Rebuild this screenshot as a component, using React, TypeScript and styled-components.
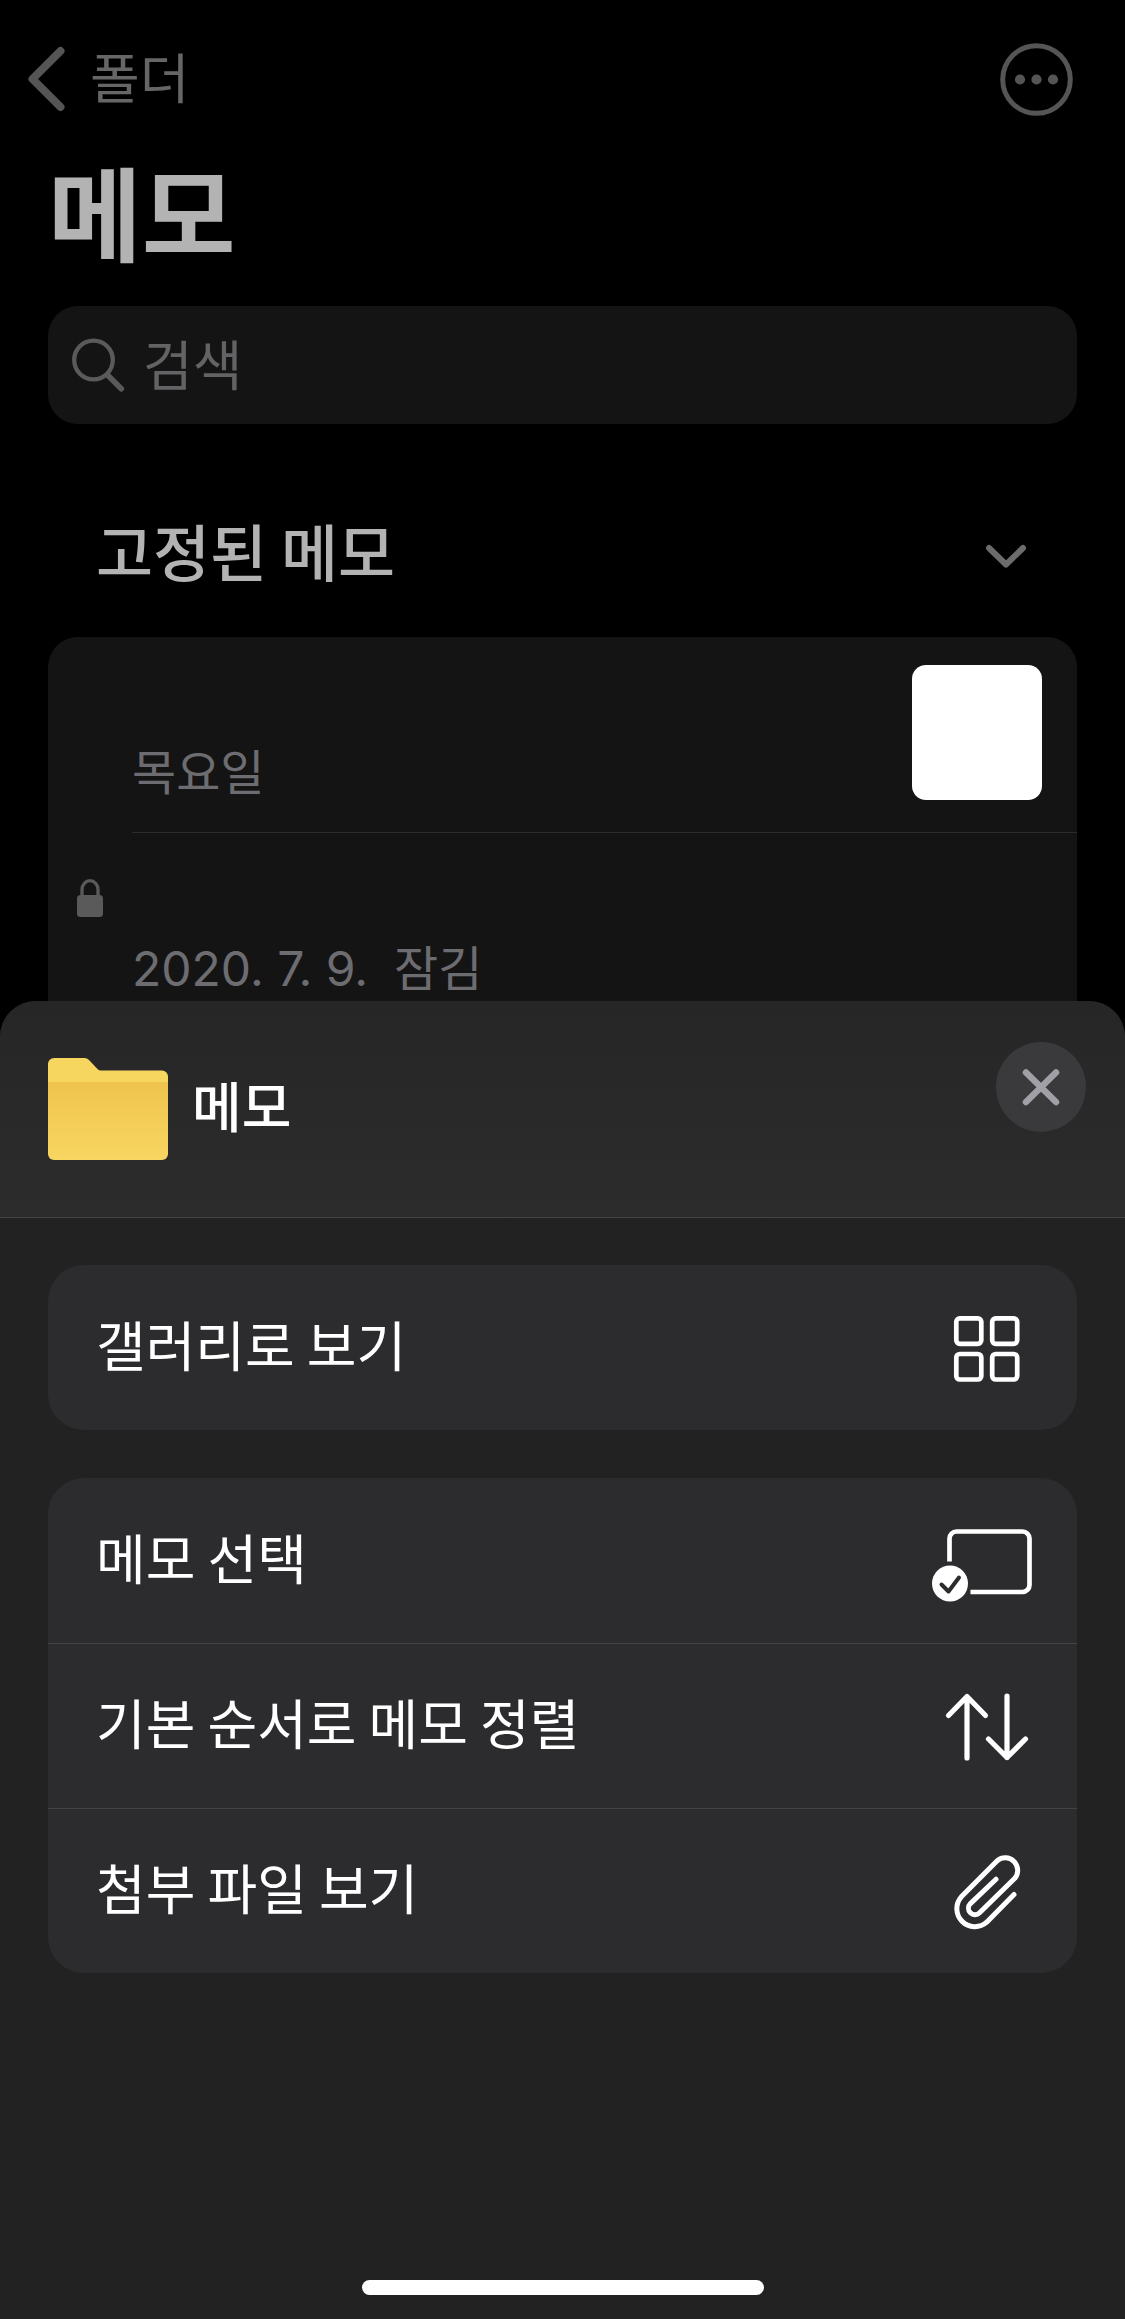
import React from "react";
import styled, { createGlobalStyle } from "styled-components";

const GlobalStyle = createGlobalStyle`
  *, *::before, *::after { box-sizing: border-box; }
  body {
    margin: 0;
    background: #000;
    font-family: "Noto Sans CJK KR", "Noto Sans", sans-serif;
  }
  h1, h2, p, ul { margin: 0; padding: 0; }
  button { border: 0; background: none; padding: 0; font: inherit; color: inherit; cursor: pointer; }
  svg { display: block; flex: none; overflow: visible; }
`;

const Screen = styled.div`
  display: flex;
  flex-direction: column;
  min-height: 100vh;
`;

const NotesPage = styled.main`
  padding: 0 48px;
`;

const NavBar = styled.nav`
  display: flex;
  align-items: center;
  justify-content: space-between;
  height: 122px;
  margin: 0 -20px;
  padding-top: 36px;
`;

const BackLink = styled.a`
  display: flex;
  align-items: center;
  gap: 26px;
  color: #666;
  font-size: 54px;
  line-height: 72px;
  text-decoration: none;
`;

const BackLabel = styled.span`
  padding-bottom: 6px;
`;

const MoreButton = styled.button`
  margin-right: 24px;
`;

const PageTitle = styled.h1`
  margin-top: 28px;
  color: #b3b3b3;
  font-size: 102px;
  font-weight: 700;
  line-height: 120px;
`;

const SearchField = styled.label`
  display: flex;
  align-items: center;
  gap: 18px;
  height: 118px;
  margin-top: 36px;
  padding: 0 24px;
  border-radius: 30px;
  background: #141414;
`;

const SearchInput = styled.input`
  flex: 1;
  min-width: 0;
  height: 78px;
  padding: 0 0 6px;
  border: 0;
  outline: 0;
  background: none;
  color: #b3b3b3;
  font-family: inherit;
  font-size: 54px;
  line-height: 72px;
  &::placeholder { color: #636366; opacity: 1; }
`;

const SectionHeader = styled.div`
  display: flex;
  align-items: center;
  justify-content: space-between;
  padding: 90px 48px 51px;
`;

const SectionTitle = styled.h2`
  color: #b3b3b3;
  font-size: 62px;
  font-weight: 500;
  line-height: 72px;
`;

const NoteList = styled.ul`
  list-style: none;
  overflow: hidden;
  border-radius: 30px 30px 0 0;
  background: #141414;
`;

const NoteItem = styled.li`
  display: flex;
`;

const NoteGutter = styled.div`
  display: flex;
  align-items: flex-start;
  justify-content: center;
  width: 84px;
  padding-top: 46px;
`;

const NoteBody = styled.div<{ $last?: boolean }>`
  display: flex;
  flex: 1;
  align-items: flex-start;
  justify-content: space-between;
  padding-right: 35px;
  border-bottom: 1px solid ${(p) => (p.$last ? "transparent" : "#2c2c2e")};
`;

const NoteMeta = styled.p`
  display: flex;
  align-items: baseline;
  gap: 26px;
  padding: 104px 0 35px;
  color: #6c6c71;
  font-size: 48px;
  line-height: 56px;
`;

const NoteDate = styled.time`
  font-family: Inter, "Noto Sans CJK KR", sans-serif;
`;

const Thumbnail = styled.div`
  width: 130px;
  height: 135px;
  margin-top: 28px;
  border-radius: 14px;
  background: #fff;
`;

const Sheet = styled.section`
  position: relative;
  display: flex;
  flex: 1;
  flex-direction: column;
  margin-top: -32px;
  overflow: hidden;
  border-radius: 36px 36px 0 0;
  background: #222;
`;

const SheetHeader = styled.header`
  display: flex;
  align-items: center;
  gap: 24px;
  height: 217px;
  padding: 0 39px 0 48px;
  border-bottom: 1px solid #444;
  background: linear-gradient(#262626, #2c2c2c);
`;

const SheetTitle = styled.h2`
  flex: 1;
  padding-bottom: 8px;
  color: #fff;
  font-size: 54px;
  font-weight: 500;
  line-height: 72px;
`;

const CloseButton = styled.button`
  display: flex;
  align-items: center;
  justify-content: center;
  align-self: flex-start;
  width: 90px;
  height: 90px;
  margin-top: 41px;
  border-radius: 50%;
  background: #3a3a3c;
`;

const SheetBody = styled.div`
  display: flex;
  flex-direction: column;
  gap: 48px;
  padding: 47px 48px;
`;

const ActionGroup = styled.div`
  display: flex;
  flex-direction: column;
  overflow: hidden;
  border-radius: 36px;
  background: #2c2c2e;
`;

const ActionRow = styled.button`
  display: flex;
  align-items: center;
  justify-content: space-between;
  height: 165px;
  padding: 0 42px 0 48px;
  color: #fff;
  font-size: 54px;
  line-height: 72px;
  text-align: left;
  & + & { border-top: 1px solid #434345; }
`;

const ActionLabel = styled.span`
  padding-bottom: 8px;
`;

const HomeIndicator = styled.div`
  width: 402px;
  height: 15px;
  margin: auto auto 24px;
  border-radius: 8px;
  background: #fff;
`;

const line = {
  fill: "none",
  stroke: "#fff",
  strokeWidth: 4.7,
  strokeLinecap: "round",
  strokeLinejoin: "round",
} as const;

const BackIcon = () => (
  <svg width="36" height="64" viewBox="0 0 36 64" aria-hidden="true">
    <path d="M32.5 4 4.5 32l28 28" fill="none" stroke="#555" strokeWidth="8" strokeLinecap="round" strokeLinejoin="round" />
  </svg>
);

const MoreIcon = () => (
  <svg width="73" height="73" viewBox="0 0 73 73" aria-hidden="true">
    <circle cx="36.5" cy="36.5" r="33.8" fill="none" stroke="#555" strokeWidth="5" />
    <g fill="#555">
      <circle cx="20" cy="36.5" r="5.1" />
      <circle cx="36.5" cy="36.5" r="5.1" />
      <circle cx="53" cy="36.5" r="5.1" />
    </g>
  </svg>
);

const SearchIcon = () => (
  <svg width="53" height="54" viewBox="0 0 53 54" fill="none" stroke="#5a5a5a" aria-hidden="true">
    <circle cx="21.5" cy="22" r="19.3" strokeWidth="4.3" />
    <path d="M35.5 37 49.3 50.8" strokeWidth="5.6" strokeLinecap="round" />
  </svg>
);

const ChevronDownIcon = () => (
  <svg width="46" height="34" viewBox="0 0 46 34" aria-hidden="true">
    <path d="M6 15 23 31.5 40 15" fill="none" stroke="#6c6c6c" strokeWidth="6" strokeLinecap="round" strokeLinejoin="round" />
  </svg>
);

const LockIcon = () => (
  <svg width="26" height="38" viewBox="0 0 26 38" aria-hidden="true">
    <path d="M5 18v-7.5a8 8.8 0 0 1 16 0V18" fill="none" stroke="#5a5a5a" strokeWidth="3.3" />
    <rect y="16" width="26" height="22" rx="3.5" fill="#5a5a5a" />
  </svg>
);

const FolderIcon = () => (
  <svg width="120" height="102" viewBox="0 0 120 102" aria-hidden="true">
    <defs>
      <linearGradient id="folderFront" x1="0" y1="0" x2="0" y2="1">
        <stop offset="0" stopColor="#efc44e" />
        <stop offset="1" stopColor="#f8d661" />
      </linearGradient>
    </defs>
    <path d="M0 6a6 6 0 0 1 6-6h30.500q2.500 0 4.500 2l8.500 9q1.500 1.500 3.500 1.500h61a6 6 0 0 1 6 6V40H0z" fill="#f7d660" />
    <path d="M0 25.500q0-1.500 1.500-1.500h117q1.500 0 1.500 1.500V96a6 6 0 0 1-6 6H6a6 6 0 0 1-6-6z" fill="url(#folderFront)" />
  </svg>
);

const CloseIcon = () => (
  <svg width="38" height="38" viewBox="0 0 38 38" aria-hidden="true">
    <path d="M4 4.500 34 34M34 4.500 4 34" stroke="#a0a0a7" strokeWidth="6.500" strokeLinecap="round" />
  </svg>
);

const GridIcon = () => (
  <svg width="96" height="96" viewBox="0 0 96 96" {...line} aria-hidden="true">
    <rect x="17.300" y="18.300" width="25" height="25.500" rx="3.500" />
    <rect x="53.200" y="18.300" width="25" height="25.500" rx="3.500" />
    <rect x="17.300" y="54" width="25" height="25.500" rx="3.500" />
    <rect x="53.200" y="54" width="25" height="25.500" rx="3.500" />
  </svg>
);

const SelectIcon = () => (
  <svg width="96" height="96" viewBox="0 0 96 96" aria-hidden="true">
    <g {...line} strokeLinecap="butt">
      <path d="M10.500 48.500V25.500a7 7 0 0 1 7-7h66a7 7 0 0 1 7 7V72a7 7 0 0 1-7 7H31.500" />
    </g>
    <circle cx="11" cy="70.500" r="18" fill="#fff" />
    <path d="M2.500 71.500 9.500 78.500 20 64.500" fill="none" stroke="#2c2c2e" strokeWidth="4" strokeLinecap="round" strokeLinejoin="round" />
  </svg>
);

const SortIcon = () => (
  <svg width="96" height="96" viewBox="0 0 96 96" {...line} strokeWidth={5.2} aria-hidden="true">
    <path d="M28 80V18.500M9.500 37.500 28 18.500l18.500 19" />
    <path d="M68 18v61.500M49.500 61 68 79.500 86.500 61" />
  </svg>
);

const ClipIcon = () => (
  <svg width="96" height="96" viewBox="0 0 96 96" {...line} strokeWidth={5} aria-hidden="true">
    <path d="M75 51.500 47.700 79.200A18 18 0 0 1 22.300 53.800L58.200 17.700A12.500 12.500 0 0 1 75.800 35.300L40.600 69.800A6.500 6.500 0 0 1 31.400 60.600L57 36.200" />
  </svg>
);

type Action = { label: string; icon: React.ReactNode };

const actionGroups: Action[][] = [
  [{ label: "갤러리로 보기", icon: <GridIcon /> }],
  [
    { label: "메모 선택", icon: <SelectIcon /> },
    { label: "기본 순서로 메모 정렬", icon: <SortIcon /> },
    { label: "첨부 파일 보기", icon: <ClipIcon /> },
  ],
];

export default function App() {
  return (
    <>
      <GlobalStyle />
      <Screen>
        <NotesPage>
          <NavBar>
            <BackLink href="#folders">
              <BackIcon />
              <BackLabel>폴더</BackLabel>
            </BackLink>
            <MoreButton type="button" aria-label="더 보기">
              <MoreIcon />
            </MoreButton>
          </NavBar>
          <PageTitle>메모</PageTitle>
          <SearchField>
            <SearchIcon />
            <SearchInput type="text" placeholder="검색" aria-label="검색" />
          </SearchField>
          <SectionHeader>
            <SectionTitle>고정된 메모</SectionTitle>
            <button type="button" aria-label="접기">
              <ChevronDownIcon />
            </button>
          </SectionHeader>
          <NoteList>
            <NoteItem>
              <NoteGutter />
              <NoteBody>
                <NoteMeta>목요일</NoteMeta>
                <Thumbnail />
              </NoteBody>
            </NoteItem>
            <NoteItem>
              <NoteGutter>
                <LockIcon />
              </NoteGutter>
              <NoteBody $last>
                <NoteMeta>
                  <NoteDate dateTime="2020-07-09">2020. 7. 9.</NoteDate>
                  <span>잠김</span>
                </NoteMeta>
              </NoteBody>
            </NoteItem>
          </NoteList>
        </NotesPage>

        <Sheet aria-label="메모">
          <SheetHeader>
            <FolderIcon />
            <SheetTitle>메모</SheetTitle>
            <CloseButton type="button" aria-label="닫기">
              <CloseIcon />
            </CloseButton>
          </SheetHeader>
          <SheetBody>
            {actionGroups.map((group) => (
              <ActionGroup key={group[0].label}>
                {group.map((action) => (
                  <ActionRow type="button" key={action.label}>
                    <ActionLabel>{action.label}</ActionLabel>
                    {action.icon}
                  </ActionRow>
                ))}
              </ActionGroup>
            ))}
          </SheetBody>
          <HomeIndicator />
        </Sheet>
      </Screen>
    </>
  );
}
